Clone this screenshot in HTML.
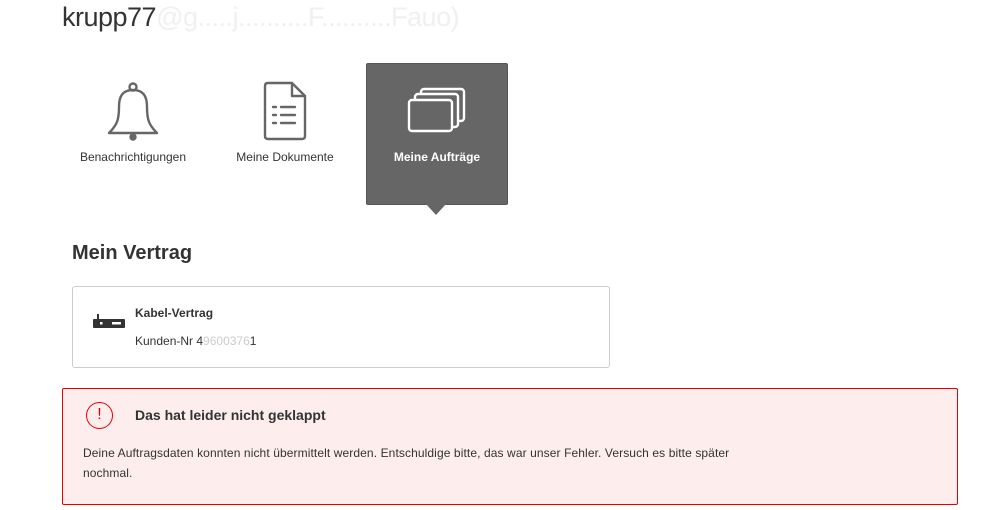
<!DOCTYPE html>
<html><head><meta charset="utf-8"><style>
*{margin:0;padding:0;box-sizing:border-box}
body{width:993px;height:510px;background:#fff;font-family:"Liberation Sans",sans-serif;color:#333;position:relative;overflow:hidden}
.a{position:absolute}
.lbl{font-size:12px;color:#333;text-align:center;width:142px}
</style></head><body>
<div class="a" style="left:62px;top:2px;font-size:27px;color:#333;font-weight:300;letter-spacing:-0.5px">krupp77<span style="color:#f0f0f0">@g.....j..........F..........Fauo)</span></div>

<svg class="a" style="left:104px;top:80px" width="60" height="62" viewBox="0 0 60 62" fill="none" stroke="#666" stroke-width="2.4" stroke-linejoin="round">
<circle cx="29" cy="7" r="3.5"/>
<path d="M29 10 C18 10 15 17 15 27 C15 40 13 45 5 53 L53 53 C45 45 43 40 43 27 C43 17 40 10 29 10 Z"/>
<circle cx="29" cy="57" r="2.5" fill="#666"/>
</svg>

<svg class="a" style="left:262px;top:80px" width="46" height="62" viewBox="0 0 46 62" fill="none" stroke="#666" stroke-width="2.4" stroke-linejoin="round" stroke-linecap="round">
<path d="M6 3 L30 3 L43 16 L43 56 Q43 59 40 59 L6 59 Q3 59 3 56 L3 6 Q3 3 6 3 Z"/>
<path d="M30 3 L30 16 L43 16"/>
<path d="M11 27h3M19 27h14M11 35h3M19 35h14M11 43h3M19 43h14"/>
</svg>

<div class="a lbl" style="left:62px;top:150px">Benachrichtigungen</div>
<div class="a lbl" style="left:214px;top:150px">Meine Dokumente</div>

<div class="a" style="left:366px;top:63px;width:142px;height:142px;background:#666;border:1px solid #555;border-radius:2px"></div>
<div class="a" style="left:426px;top:204px;width:0;height:0;border-left:10px solid transparent;border-right:10px solid transparent;border-top:11px solid #666"></div>
<svg class="a" style="left:406px;top:86px" width="62" height="48" viewBox="0 0 62 48" fill="none" stroke="#fff" stroke-width="2.4" stroke-linejoin="round">
<rect x="15" y="3" width="43" height="32" rx="3"/>
<rect x="9" y="8" width="43" height="33" rx="3" fill="#666"/>
<rect x="3" y="14" width="43" height="31" rx="3" fill="#666"/>
</svg>
<div class="a lbl" style="left:366px;top:150px;color:#fff;font-weight:bold">Meine Aufträge</div>

<div class="a" style="left:72px;top:242px;font-size:20px;font-weight:bold;color:#333">Mein Vertrag</div>

<div class="a" style="left:72px;top:286px;width:538px;height:82px;border:1px solid #ccc;border-radius:3px"></div>
<svg class="a" style="left:92px;top:314px" width="34" height="16" viewBox="0 0 34 16">
<rect x="5" y="0" width="2" height="6" fill="#333"/>
<rect x="1" y="5" width="32" height="9" rx="1" fill="#333"/>
<rect x="20" y="8" width="9" height="2.5" fill="#fff"/>
<rect x="8" y="8" width="2.5" height="2.5" fill="#fff"/>
</svg>
<div class="a" style="left:135px;top:306px;font-size:12px;font-weight:bold;color:#333">Kabel-Vertrag</div>
<div class="a" style="left:135px;top:334px;font-size:12px;color:#333">Kunden-Nr 4<span style="color:#ccc">9600376</span>1</div>

<div class="a" style="left:62px;top:388px;width:896px;height:117px;background:#fdeded;border:1px solid #e60000;border-radius:2px"></div>
<div class="a" style="left:86px;top:402px;width:27px;height:27px;border:1.5px solid #e60000;border-radius:50%;color:#e60000;font-size:16px;text-align:center;line-height:24px">!</div>
<div class="a" style="left:135px;top:407px;font-size:14px;font-weight:bold;color:#333">Das hat leider nicht geklappt</div>
<div class="a" style="left:83px;top:443px;font-size:12px;color:#333;line-height:20px;width:680px;letter-spacing:0.1px">Deine Auftragsdaten konnten nicht übermittelt werden. Entschuldige bitte, das war unser Fehler. Versuch es bitte später nochmal.</div>
</body></html>
